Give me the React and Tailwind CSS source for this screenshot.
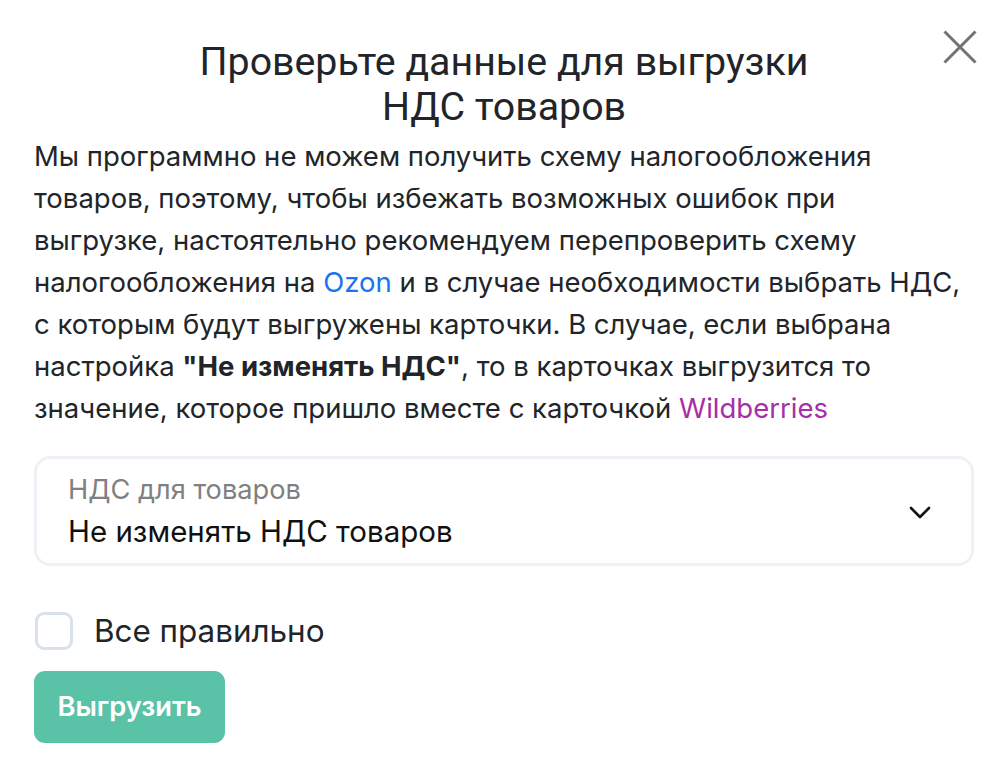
import React from "react";

export default function App() {
  return (
    <div className="relative w-[1008px] h-[776px] bg-white overflow-hidden font-['Inter',sans-serif]">
      <button className="absolute left-[942px] top-[29px] w-[36px] h-[36px] flex items-center justify-center" aria-label="close">
        <svg width="36" height="36" viewBox="0 0 36 36" fill="none">
          <path d="M2.5 2.5L33.5 33.5M33.5 2.5L2.5 33.5" stroke="#727272" strokeWidth="3" />
        </svg>
      </button>
      <div className="pl-[34px] pr-[34px] pt-[40px] flex flex-col">
        <h2 className="text-center text-[39.3px] leading-[45px] text-[#212529] font-normal font-['Roboto',sans-serif]">
          Проверьте данные для выгрузки
          <br />
          НДС товаров
        </h2>
        <p className="mt-[5px] w-[928px] text-[27.5px] leading-[42px] text-[#212529]">
          Мы программно не можем получить схему налогообложения товаров, поэтому, чтобы избежать возможных ошибок при выгрузке, настоятельно рекомендуем перепроверить схему налогообложения на{" "}
          <span className="text-[#1a73f0]">Ozon</span> и в случае необходимости выбрать НДС, с которым будут выгружены карточки. В случае, если выбрана настройка{" "}
          <b className="font-bold">"Не изменять НДС"</b>, то в карточках выгрузится то значение, которое пришло вместе с карточкой{" "}
          <span className="text-[#a72ea6]">Wildberries</span>
        </p>
        <div className="mt-[27px] h-[110px] border-[3px] border-[#eef1f6] rounded-[16px] flex items-center pl-[31px] pr-[40px]">
          <div className="flex-1 flex flex-col">
            <span className="text-[27.2px] leading-[32px] text-[#808080]">НДС для товаров</span>
            <span className="text-[29.5px] leading-[36px] text-[#111111] mt-[7px]">Не изменять НДС товаров</span>
          </div>
          <svg width="22" height="13" viewBox="0 0 22 13" fill="none" className="mt-[2px]">
            <path d="M2 2L11 11L20 2" stroke="#111111" strokeWidth="2.6" strokeLinecap="round" strokeLinejoin="round" />
          </svg>
        </div>
        <label className="mt-[46px] flex items-center gap-[21px] pl-[1px]">
          <span className="w-[38px] h-[38px] rounded-[9px] border-[3px] border-[#d9e1ea] bg-white shrink-0"></span>
          <span className="text-[31.4px] leading-[38px] text-[#212529]">Все правильно</span>
        </label>
        <button className="mt-[21px] self-start w-[191px] h-[72px] rounded-[11px] bg-[#5ac2a7] text-white text-[27.3px] font-semibold">
          Выгрузить
        </button>
      </div>
    </div>
  );
}
